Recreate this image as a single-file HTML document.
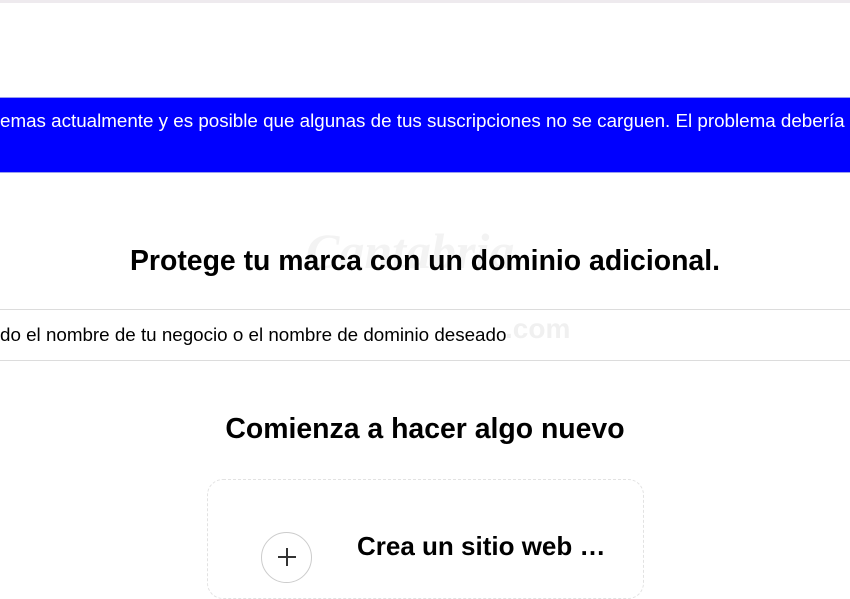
<!DOCTYPE html>
<html><head><meta charset="utf-8"><style>
body{margin:0;width:850px;height:560px;overflow:hidden;background:#fff;font-family:"Liberation Sans",Arial,sans-serif;position:relative;color:#000}
.a{position:absolute;white-space:nowrap}
</style></head><body>
<div class="a" style="left:0;top:0;width:850px;height:3px;background:#eeeaee"></div>
<div class="a" style="left:0;top:97px;width:850px;height:76px;background:#0000ff;border-top:1px solid #9aa0ee;border-bottom:1px solid #9aa0ee;box-sizing:border-box"></div>
<div class="a" style="left:0;top:110px;color:#fff;font-size:18.8px">emas actualmente y es posible que algunas de tus suscripciones no se carguen. El problema debería</div>
<div class="a" style="left:306px;top:222px;font-size:50px;font-style:italic;font-weight:bold;color:#f3f3f3;font-family:'Liberation Serif',serif">Cantabria</div>
<div class="a" style="left:0;top:245px;width:850px;text-align:center;font-size:28.4px;font-weight:bold">Protege tu marca con un dominio adicional.</div>
<div class="a" style="left:0;top:309px;width:850px;height:1px;background:#dcdcdc"></div>
<div class="a" style="left:0;top:360px;width:850px;height:1px;background:#dcdcdc"></div>
<div class="a" style="left:505px;top:313px;font-size:28px;font-weight:bold;color:#f0f0f0">.com</div>
<div class="a" style="left:0;top:324px;font-size:18.8px">do el nombre de tu negocio o el nombre de dominio deseado</div>
<div class="a" style="left:0;top:413px;width:850px;text-align:center;font-size:28.4px;font-weight:bold">Comienza a hacer algo nuevo</div>
<div class="a" style="left:207px;top:479px;width:437px;height:120px;border:1px dashed #e2e2e2;border-radius:16px;box-sizing:border-box"></div>
<div class="a" style="left:261px;top:532px;width:51px;height:51px;border:1px solid #ccc;border-radius:50%;box-sizing:border-box"></div>
<div class="a" style="left:278px;top:556px;width:18px;height:2px;background:#333"></div>
<div class="a" style="left:286px;top:548px;width:2px;height:18px;background:#333"></div>
<div class="a" style="left:357px;top:531px;font-size:26px;font-weight:bold">Crea un sitio web …</div>
</body></html>
